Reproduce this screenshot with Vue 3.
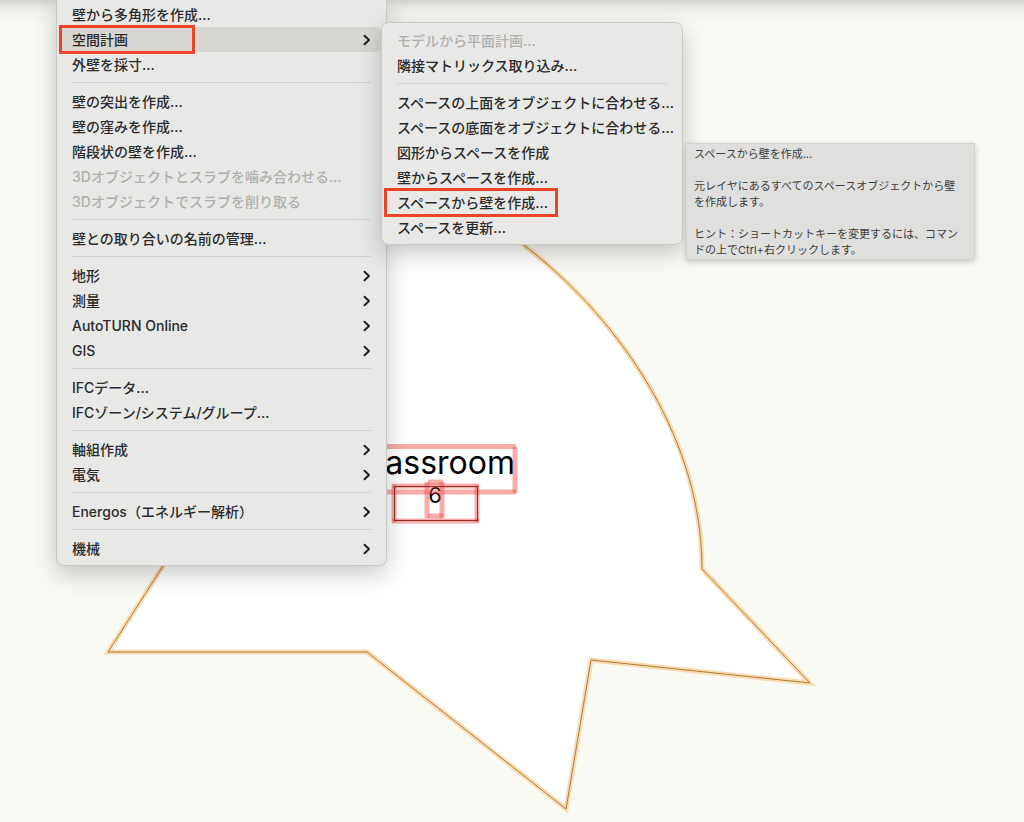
<script setup>
const mainGroups = [
  [
    { label: '壁から多角形を作成...' },
    { label: '空間計画', sub: true, active: true },
    { label: '外壁を採寸...' },
  ],
  [
    { label: '壁の突出を作成...' },
    { label: '壁の窪みを作成...' },
    { label: '階段状の壁を作成...' },
    { label: '3Dオブジェクトとスラブを噛み合わせる...', disabled: true },
    { label: '3Dオブジェクトでスラブを削り取る', disabled: true },
  ],
  [{ label: '壁との取り合いの名前の管理...' }],
  [
    { label: '地形', sub: true },
    { label: '測量', sub: true },
    { label: 'AutoTURN Online', sub: true },
    { label: 'GIS', sub: true },
  ],
  [{ label: 'IFCデータ...' }, { label: 'IFCゾーン/システム/グループ...' }],
  [
    { label: '軸組作成', sub: true },
    { label: '電気', sub: true },
  ],
  [{ label: 'Energos（エネルギー解析）', sub: true }],
  [{ label: '機械', sub: true }],
]

const subGroups = [
  [{ label: 'モデルから平面計画...', disabled: true }, { label: '隣接マトリックス取り込み...' }],
  [
    { label: 'スペースの上面をオブジェクトに合わせる...' },
    { label: 'スペースの底面をオブジェクトに合わせる...' },
    { label: '図形からスペースを作成' },
    { label: '壁からスペースを作成...' },
    { label: 'スペースから壁を作成...', marked: true },
    { label: 'スペースを更新...' },
  ],
]
</script>

<template>
  <main class="stage">
    <svg class="drawing" width="1024" height="822" viewBox="0 0 1024 822" aria-label="Classroom">
      <path class="halo" d="M108 652 L250 430 L300 150 L383 160 Q460 190 521 243 C610 310 702 430 702 569 L810 683 L591 660 L566 809 L367 652 Z" />
      <path class="edge" d="M108 652 L250 430 L300 150 L383 160 Q460 190 521 243 C610 310 702 430 702 569 L810 683 L591 660 L566 809 L367 652 Z" />
      <text class="room" x="515" y="474" text-anchor="end">Classroom</text>
      <text class="number" x="435" y="503" text-anchor="middle">6</text>
      <g class="handles">
        <path d="M340 446.500H516" />
        <path d="M340 492H516" />
        <path d="M515 447V493" />
        <path d="M394 485V522" />
        <path d="M477 485V522" />
        <path d="M392 486H479" />
        <path d="M392 521H479" />
        <path d="M427 482V518" />
        <path d="M442 482V518" />
        <path d="M428 482H443" />
        <path d="M428 516H443" />
      </g>
      <rect class="frame" x="394.500" y="486.500" width="83" height="34" />
    </svg>

    <nav class="menu main-menu" aria-label="メニュー">
      <ul v-for="(group, g) in mainGroups" :key="g" class="group">
        <li v-for="item in group" :key="item.label">
          <button type="button" class="item" :class="{ active: item.active }" :disabled="item.disabled">
            <span>{{ item.label }}</span>
            <svg v-if="item.sub" class="chevron" width="8" height="12" viewBox="0 0 8 12" aria-hidden="true">
              <path d="M1.500 1.800 L6 6 L1.500 10.200" />
            </svg>
          </button>
          <span v-if="item.active" class="mark"></span>
        </li>
      </ul>
    </nav>

    <nav class="menu sub-menu" aria-label="空間計画">
      <ul v-for="(group, g) in subGroups" :key="g" class="group">
        <li v-for="item in group" :key="item.label">
          <button type="button" class="item" :disabled="item.disabled">
            <span>{{ item.label }}</span>
          </button>
          <span v-if="item.marked" class="mark wide"></span>
        </li>
      </ul>
    </nav>

    <aside class="tooltip" role="tooltip">
      <p>スペースから壁を作成...</p>
      <p>元レイヤにあるすべてのスペースオブジェクトから壁<br />を作成します。</p>
      <p>ヒント：ショートカットキーを変更するには、コマン<br />ドの上でCtrl+右クリックします。</p>
    </aside>
  </main>
</template>

<style>
body {
  background: #f9faf4;
}
</style>

<style scoped>
.stage {
  position: relative;
  min-height: 100vh;
  overflow: hidden;
  background: linear-gradient(#d2d3ce, #e6e7e1 7px, #f3f4ee 14px, #f9faf4 24px);
  font-family: Inter, "Noto Sans CJK JP", sans-serif;
}
.drawing {
  display: block;
}
.halo {
  fill: #fff;
  stroke: #fbdcb2;
  stroke-width: 5;
}
.edge {
  fill: none;
  stroke: #ad7a3e;
  stroke-width: 1;
}
.room {
  font-size: 32px;
}
.number {
  font-size: 22px;
}
.handles path {
  fill: none;
  stroke: rgba(235, 70, 65, 0.45);
  stroke-width: 5;
}
.frame {
  fill: none;
  stroke: #8e3029;
  stroke-width: 1;
}
.menu {
  position: absolute;
  box-sizing: border-box;
  border: 1px solid #c9cac7;
  background: #e8e8e6;
  box-shadow: 0 8px 24px rgba(0, 0, 0, 0.22);
}
.main-menu {
  left: 56px;
  top: 0;
  width: 331px;
  padding: 2px 5px 4px;
  border-top: 0;
  border-radius: 0 0 8px 8px;
}
.sub-menu {
  left: 381px;
  top: 22px;
  width: 302px;
  padding: 5px 5px 4px;
  border-radius: 8px;
}
.group {
  margin: 0;
  padding: 0;
  list-style: none;
}
.group + .group::before {
  content: "";
  display: block;
  height: 1px;
  margin: 5px 10px 6px;
  background: #d0d0ce;
}
li {
  position: relative;
}
.item {
  display: flex;
  align-items: center;
  justify-content: space-between;
  width: 100%;
  height: 25px;
  padding: 0 10px;
  border: 0;
  border-radius: 5px;
  background: none;
  color: #2b2b2b;
  font: 500 14px/25px Inter, "Noto Sans CJK JP", sans-serif;
  text-align: left;
  white-space: nowrap;
}
.item:disabled {
  color: #b0b0ae;
}
.active {
  background: #d7d6d0;
}
.chevron path {
  fill: none;
  stroke: #222;
  stroke-width: 2;
  stroke-linecap: round;
  stroke-linejoin: round;
}
.mark {
  position: absolute;
  left: -3px;
  top: -2px;
  box-sizing: border-box;
  width: 136px;
  height: 29px;
  border: 3px solid #ec4426;
  pointer-events: none;
}
.mark.wide {
  width: 174px;
}
.tooltip {
  position: absolute;
  left: 686px;
  top: 143px;
  box-sizing: border-box;
  width: 289px;
  padding: 2px 7px 1px;
  border: 1px solid #d3d3d0;
  background: #dfdfdd;
  box-shadow: 0 2px 6px rgba(0, 0, 0, 0.2);
  color: #3e3e3e;
  font-size: 11px;
  line-height: 16px;
  white-space: nowrap;
}
.tooltip p {
  margin: 0;
}
.tooltip p + p {
  margin-top: 16px;
}
</style>
